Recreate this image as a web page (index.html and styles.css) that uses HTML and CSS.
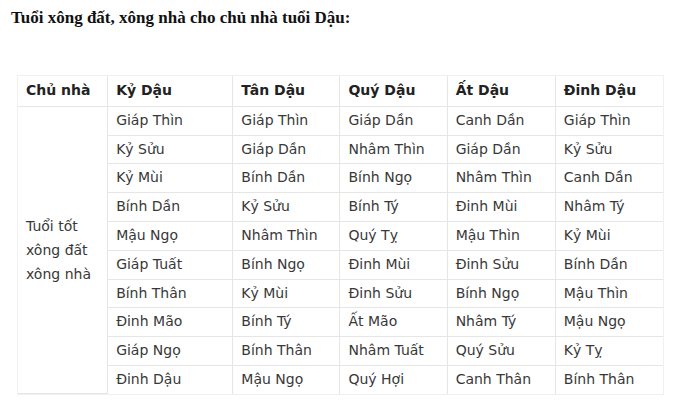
FILE: index.html
```html
<!DOCTYPE html>
<html lang="vi">
<head>
<meta charset="utf-8">
<title>Tuổi xông đất</title>
<link rel="stylesheet" href="styles.css">
</head>
<body>
<h2 class="title">Tuổi xông đất, xông nhà cho chủ nhà tuổi Dậu:</h2>
<div class="table-wrap">
<table class="age-table">
<thead>
<tr><th class="c0">Chủ nhà</th><th class="c1">Kỷ Dậu</th><th class="c2">Tân Dậu</th><th class="c3">Quý Dậu</th><th class="c4">Ất Dậu</th><th class="c5">Đinh Dậu</th></tr>
</thead>
<tbody>
<tr><td rowspan="10" class="owner">Tuổi tốt<br>xông đất<br>xông nhà</td><td>Giáp Thìn</td><td>Giáp Thìn</td><td>Giáp Dần</td><td>Canh Dần</td><td>Giáp Thìn</td></tr>
<tr><td>Kỷ Sửu</td><td>Giáp Dần</td><td>Nhâm Thìn</td><td>Giáp Dần</td><td>Kỷ Sửu</td></tr>
<tr><td>Kỷ Mùi</td><td>Bính Dần</td><td>Bính Ngọ</td><td>Nhâm Thìn</td><td>Canh Dần</td></tr>
<tr><td>Bính Dần</td><td>Kỷ Sửu</td><td>Bính Tý</td><td>Đinh Mùi</td><td>Nhâm Tý</td></tr>
<tr><td>Mậu Ngọ</td><td>Nhâm Thìn</td><td>Quý Tỵ</td><td>Mậu Thìn</td><td>Kỷ Mùi</td></tr>
<tr><td>Giáp Tuất</td><td>Bính Ngọ</td><td>Đinh Mùi</td><td>Đinh Sửu</td><td>Bính Dần</td></tr>
<tr><td>Bính Thân</td><td>Kỷ Mùi</td><td>Đinh Sửu</td><td>Bính Ngọ</td><td>Mậu Thìn</td></tr>
<tr><td>Đinh Mão</td><td>Bính Tý</td><td>Ất Mão</td><td>Nhâm Tý</td><td>Mậu Ngọ</td></tr>
<tr><td>Giáp Ngọ</td><td>Bính Thân</td><td>Nhâm Tuất</td><td>Quý Sửu</td><td>Kỷ Tỵ</td></tr>
<tr><td>Đinh Dậu</td><td>Mậu Ngọ</td><td>Quý Hợi</td><td>Canh Thân</td><td>Bính Thân</td></tr>
</tbody>
</table>
</div>
</body>
</html>
```

FILE: styles.css
```css
html, body {
  margin: 0;
  padding: 0;
  background: #ffffff;
}

body {
  padding: 8px 0 0 11px;
}

.title {
  margin: 0;
  font-family: "Liberation Serif", "Times New Roman", serif;
  font-weight: bold;
  font-size: 17px;
  line-height: 20px;
  color: #111111;
}

.table-wrap {
  margin-top: 47px;
  margin-left: 6px;
  width: 645px;
  border: 1px solid #f0f0f0;
}

.age-table {
  width: 645px;
  border-collapse: collapse;
  font-family: "DejaVu Sans", Verdana, sans-serif;
  font-size: 14px;
  line-height: 18.8px;
  color: #383838;
  table-layout: fixed;
}

.age-table th,
.age-table td {
  border: 1px solid #e6e6e6;
  padding: 4px 8px 5px;
  text-align: left;
  vertical-align: middle;
}

.age-table tr:first-child th { border-top: none; }
.age-table th:first-child,
.age-table td:first-child { border-left: none; }
.age-table th:last-child,
.age-table td:last-child { border-right: none; }
.age-table tbody tr:last-child td { border-bottom: none; }

.age-table th {
  font-weight: bold;
  color: #222222;
  padding-top: 5px;
  padding-bottom: 6px;
}

.c0 { width: 73px; }
.c1 { width: 108px; }
.c2 { width: 90px; }
.c3 { width: 90px; }
.c4 { width: 91px; }
.c5 { width: 91px; }

.owner {
  line-height: 24px;
}
```
